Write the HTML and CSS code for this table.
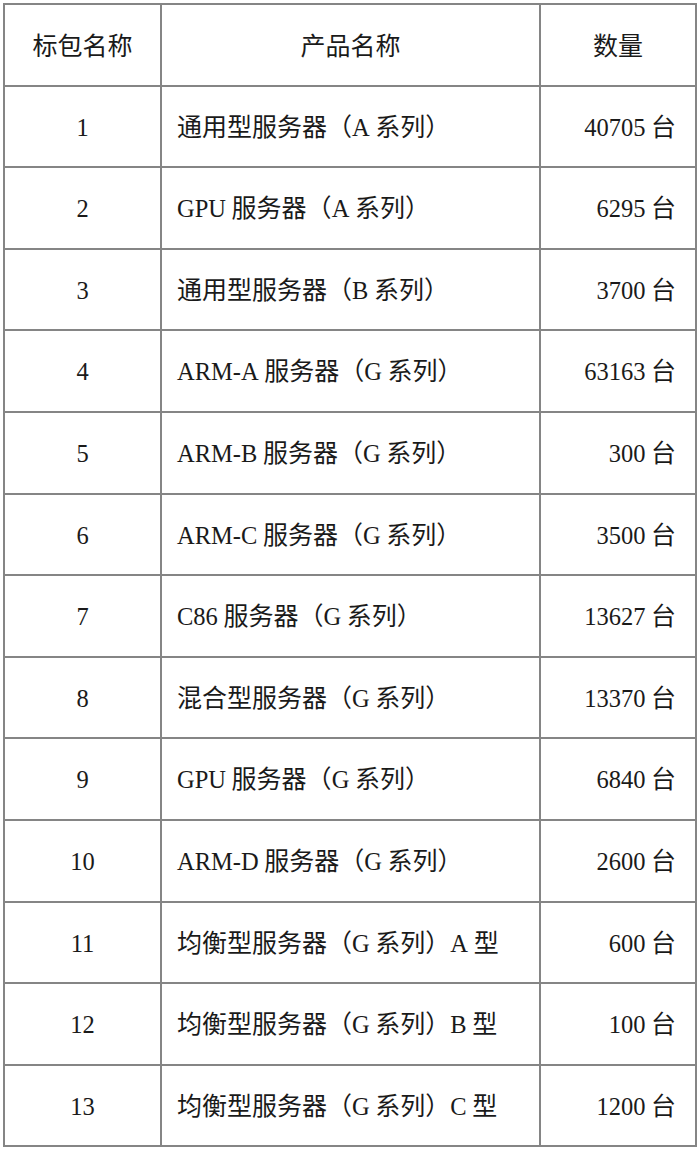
FILE: index.html
```html
<!DOCTYPE html>
<html lang="zh-CN">
<head>
<meta charset="utf-8">
<title>标包列表</title>
<link rel="stylesheet" href="styles.css">
</head>
<body>
<div class="page">
<table class="bid-table">
  <colgroup>
    <col class="c-id">
    <col class="c-name">
    <col class="c-qty">
  </colgroup>
  <thead>
    <tr><th>标包名称</th><th>产品名称</th><th>数量</th></tr>
  </thead>
  <tbody>
    <tr><td class="id"><span class="en">1</span></td><td class="name">通用型服务器（<span class="en">A</span> 系列）</td><td class="qty"><span class="en">40705</span> 台</td></tr>
    <tr><td class="id"><span class="en">2</span></td><td class="name"><span class="en">GPU</span> 服务器（<span class="en">A</span> 系列）</td><td class="qty"><span class="en">6295</span> 台</td></tr>
    <tr><td class="id"><span class="en">3</span></td><td class="name">通用型服务器（<span class="en">B</span> 系列）</td><td class="qty"><span class="en">3700</span> 台</td></tr>
    <tr><td class="id"><span class="en">4</span></td><td class="name"><span class="en">ARM-A</span> 服务器（<span class="en">G</span> 系列）</td><td class="qty"><span class="en">63163</span> 台</td></tr>
    <tr><td class="id"><span class="en">5</span></td><td class="name"><span class="en">ARM-B</span> 服务器（<span class="en">G</span> 系列）</td><td class="qty"><span class="en">300</span> 台</td></tr>
    <tr><td class="id"><span class="en">6</span></td><td class="name"><span class="en">ARM-C</span> 服务器（<span class="en">G</span> 系列）</td><td class="qty"><span class="en">3500</span> 台</td></tr>
    <tr><td class="id"><span class="en">7</span></td><td class="name"><span class="en">C86</span> 服务器（<span class="en">G</span> 系列）</td><td class="qty"><span class="en">13627</span> 台</td></tr>
    <tr><td class="id"><span class="en">8</span></td><td class="name">混合型服务器（<span class="en">G</span> 系列）</td><td class="qty"><span class="en">13370</span> 台</td></tr>
    <tr><td class="id"><span class="en">9</span></td><td class="name"><span class="en">GPU</span> 服务器（<span class="en">G</span> 系列）</td><td class="qty"><span class="en">6840</span> 台</td></tr>
    <tr><td class="id"><span class="en">10</span></td><td class="name"><span class="en">ARM-D</span> 服务器（<span class="en">G</span> 系列）</td><td class="qty"><span class="en">2600</span> 台</td></tr>
    <tr><td class="id"><span class="en">11</span></td><td class="name">均衡型服务器（<span class="en">G</span> 系列）<span class="en">A</span> 型</td><td class="qty"><span class="en">600</span> 台</td></tr>
    <tr><td class="id"><span class="en">12</span></td><td class="name">均衡型服务器（<span class="en">G</span> 系列）<span class="en">B</span> 型</td><td class="qty"><span class="en">100</span> 台</td></tr>
    <tr><td class="id"><span class="en">13</span></td><td class="name">均衡型服务器（<span class="en">G</span> 系列）<span class="en">C</span> 型</td><td class="qty"><span class="en">1200</span> 台</td></tr>
  </tbody>
</table>
</div>
</body>
</html>
```

FILE: styles.css
```css
html, body {
  margin: 0;
  padding: 0;
  background: #ffffff;
}

.page {
  padding: 3px 3px 0 3px;
}

.bid-table {
  border-collapse: collapse;
  width: 692px;
  table-layout: fixed;
  font-family: "Noto Sans CJK SC", "Liberation Serif", serif;
  font-size: 25px;
  font-weight: 400;
  color: #1a1a1a;
}

.c-id { width: 157px; }
.c-name { width: 379px; }
.c-qty { width: 156px; }

.bid-table th,
.bid-table td {
  border: 2px solid #858585;
  height: 79.6px;
  padding: 0;
  vertical-align: middle;
  font-weight: 400;
  line-height: 1;
  white-space: nowrap;
}

.bid-table th {
  text-align: center;
}

.en {
  font-family: "Liberation Serif", serif;
  font-size: 24.5px;
  font-weight: 400;
}

.id {
  text-align: center;
}

.name {
  text-align: left;
  padding-left: 15px !important;
}

.qty {
  text-align: right;
  padding-right: 19px !important;
}
```
